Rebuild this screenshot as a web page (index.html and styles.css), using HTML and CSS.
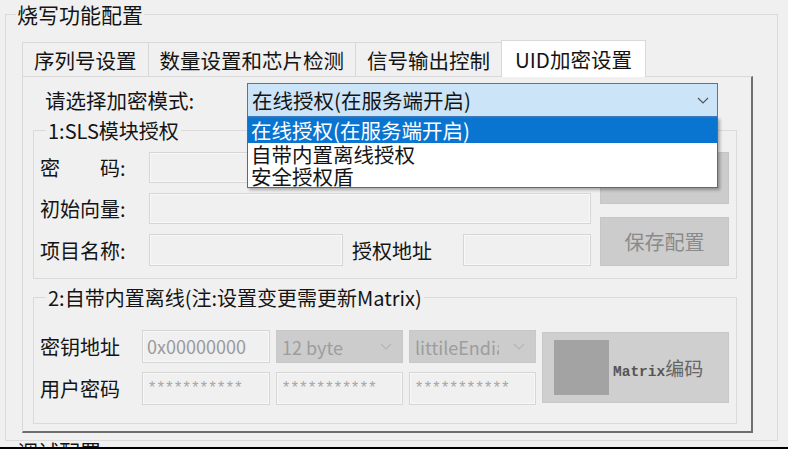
FILE: index.html
```html
<!DOCTYPE html>
<html lang="zh-CN">
<head>
 <meta charset="UTF-8">
 <meta name="viewport" content="width=device-width, initial-scale=1.0">
 <title>烧写功能配置 - UID加密设置</title>
 <link rel="stylesheet" href="styles.css">
</head>
<body>
 <div class="screen">
  <div class="group outer-group">
   <div class="group-title outer-title">烧写功能配置</div>

   <div class="tab-control">
    <div class="tab-strip">
     <div class="tab">序列号设置</div>
     <div class="tab">数量设置和芯片检测</div>
     <div class="tab">信号输出控制</div>
     <div class="tab active">UID加密设置</div>
    </div>

    <div class="tab-page">
     <div class="mode-row">
      <span class="mode-label">请选择加密模式:</span>
      <div class="combo focused">
       <span class="combo-text">在线授权(在服务端开启)</span>
       <svg class="chevron" width="12" height="7" viewBox="0 0 12 7"><path d="M1 1l5 5 5-5" fill="none" stroke="#555" stroke-width="1.2"/></svg>
       <!-- open dropdown list -->
       <ul class="dropdown">
        <li class="selected">在线授权(在服务端开启)</li>
        <li>自带内置离线授权</li>
        <li>安全授权盾</li>
       </ul>
      </div>
     </div>

     <div class="group sls-group">
      <div class="group-title">1:SLS模块授权</div>
      <div class="sls-body">
       <div class="field-col">
        <div class="field-row">
         <label class="field-label">密&emsp;&emsp;码:</label>
         <div class="textbox wide"></div>
        </div>
        <div class="field-row">
         <label class="field-label">初始向量:</label>
         <div class="textbox wide"></div>
        </div>
        <div class="field-row">
         <label class="field-label">项目名称:</label>
         <div class="textbox project"></div>
         <label class="field-label addr-label">授权地址</label>
         <div class="textbox addr"></div>
        </div>
       </div>
       <div class="btn-col">
        <button class="btn btn-read">读取配置</button>
        <button class="btn btn-save">保存配置</button>
       </div>
      </div>
     </div>

     <div class="group offline-group">
      <div class="group-title">2:自带内置离线(注:设置变更需更新Matrix)</div>
      <div class="offline-body">
       <div class="offline-grid">
        <label class="field-label">密钥地址</label>
        <div class="textbox value">0x00000000</div>
        <div class="combo disabled">
         <span class="combo-text">12 byte</span>
         <svg class="chevron" width="12" height="7" viewBox="0 0 12 7"><path d="M1 1l5 5 5-5" fill="none" stroke="#b5b5b5" stroke-width="1.2"/></svg>
        </div>
        <div class="combo disabled">
         <span class="combo-text">littileEndian</span>
         <svg class="chevron" width="12" height="7" viewBox="0 0 12 7"><path d="M1 1l5 5 5-5" fill="none" stroke="#b5b5b5" stroke-width="1.2"/></svg>
        </div>

        <label class="field-label">用户密码</label>
        <div class="textbox stars">***********</div>
        <div class="textbox stars">***********</div>
        <div class="textbox stars">***********</div>
       </div>
       <button class="matrix-btn">
        <span class="matrix-swatch"></span>
        <span class="matrix-text"><span class="mono">Matrix</span>编码</span>
       </button>
      </div>
     </div>
    </div>
   </div>
  </div>
  <div class="next-title">调试配置</div>
 </div>
 <div class="bottom-edge"></div>
</body>
</html>
```

FILE: styles.css
```css
* {
 box-sizing: border-box;
}

body {
 margin: 0;
 height: 449px;
 overflow: hidden;
 background-color: #f0f0f0;
 color: #141414;
 font-family: "Noto Sans CJK SC", "Noto Sans", sans-serif;
 font-size: 20px;
}

.screen {
 height: 447px;
 overflow: hidden;
}

.bottom-edge {
 height: 2px;
 background-color: #000;
}

/* group boxes */
.group {
 border: 1px solid #dadada;
}

.group-title {
 width: fit-content;
 margin: -10px 0 0 12px;
 padding: 0 2px;
 background-color: #f0f0f0;
 font-size: 20px;
 line-height: 20px;
}

.outer-group {
 margin: 14px 10px 0 5px;
 height: 427px;
}

.outer-title {
 margin: -14px 0 0 10px;
 padding: 0 1px;
 font-size: 21px;
 line-height: 26px;
}

.next-title {
 margin: -3px 0 0 17px;
 font-size: 21px;
 line-height: 26px;
}

/* tabs */
.tab-control {
 margin: 13px 24px 0 16px;
}

.tab-strip {
 display: flex;
 align-items: flex-end;
 height: 36px;
}

.tab {
 height: 34px;
 padding: 2px 11px 0;
 margin-right: -1px;
 border: 1px solid #d9d9d9;
 border-bottom: none;
 font-size: 20.5px;
 line-height: 30px;
 white-space: nowrap;
}

.tab.active {
 position: relative;
 z-index: 1;
 height: 37px;
 margin-bottom: -1px;
 padding: 3px 13px 0;
 background-color: #fff;
}

.tab-page {
 height: 357px;
 border-top: 1px solid #d9d9d9;
 border-left: 1px solid #d9d9d9;
 border-right: 2px solid #6e6e6e;
 border-bottom: 2px solid #6e6e6e;
}

/* mode select */
.mode-row {
 display: flex;
 align-items: center;
 margin-top: 6px;
 padding-left: 22px;
}

.mode-label {
 width: 202px;
 font-size: 20.5px;
}

.combo {
 position: relative;
 display: flex;
 align-items: center;
 justify-content: space-between;
 height: 34px;
}

.combo.focused {
 width: 471px;
 padding: 0 8px 0 4px;
 background-color: #cce4f7;
 border: 1px solid #3d7bbd;
 font-size: 20.5px;
}

.combo-text {
 flex: 1;
 overflow: hidden;
 white-space: nowrap;
}

.dropdown {
 position: absolute;
 top: 33px;
 left: -1px;
 z-index: 5;
 width: 471px;
 margin: 0;
 padding: 0;
 list-style: none;
 background-color: #fff;
 border: 1px solid #41729e;
 box-shadow: 2px 2px 3px rgba(0, 0, 0, 0.3);
 font-size: 20.5px;
}

.dropdown li {
 height: 22px;
 padding-left: 3px;
 line-height: 22px;
 overflow: hidden;
}

.dropdown li.selected {
 height: 25px;
 line-height: 25px;
 background-color: #0a74d1;
 color: #fff;
}

/* 1:SLS */
.sls-group {
 margin: 13px 14px 0 10px;
}

.sls-body {
 display: flex;
 margin-top: 11px;
 padding: 0 7px 12px 6px;
}

.field-col {
 display: flex;
 flex-direction: column;
 gap: 10px;
 width: 551px;
}

.field-row {
 display: flex;
 align-items: center;
 height: 31px;
}

.field-row:last-child {
 height: 32px;
}

.field-label {
 width: 109px;
 white-space: nowrap;
}

.addr-label {
 width: 111px;
 margin-left: 9px;
}

.textbox {
 height: 100%;
 background-color: #f0f0f0;
 border: 1px solid #d6d6d6;
 box-shadow: inset 0 0 0 1px #f8f8f8;
 color: #9a9a9a;
 white-space: nowrap;
 overflow: hidden;
}

.textbox.wide {
 width: 442px;
}

.textbox.project {
 width: 194px;
}

.textbox.addr {
 width: 128px;
}

.btn-col {
 display: flex;
 flex-direction: column;
 gap: 13px;
 width: 129px;
 margin-left: 9px;
}

.btn {
 width: 100%;
 padding: 0;
 background-color: #cccccc;
 border: 1px solid #c6c6c6;
 color: #8a8a8a;
 font-family: inherit;
 font-size: 20px;
}

.btn-read {
 height: 52px;
 color: transparent;
}

.btn-save {
 height: 49px;
}

/* 2:offline */
.offline-group {
 margin: 18px 14px 0 10px;
}

.offline-body {
 display: flex;
 align-items: center;
 margin-top: 22px;
 padding: 0 7px 18px 6px;
}

.offline-grid {
 display: grid;
 grid-template-columns: 96px 128px 127px 127px;
 grid-auto-rows: 33px;
 column-gap: 6px;
 row-gap: 9px;
 align-items: center;
}

.offline-grid .field-label {
 width: auto;
}

.textbox.value {
 padding-left: 4px;
 font-size: 18px;
 line-height: 31px;
}

.textbox.stars {
 padding-left: 6px;
 font-family: "Liberation Sans", sans-serif;
 font-size: 16px;
 letter-spacing: 2.4px;
 line-height: 29px;
 color: #a5a5a5;
}

.combo.disabled {
 height: 33px;
 padding: 0 10px 0 5px;
 background-color: #cccccc;
 border: 1px solid #c8c8c8;
 color: #9d9d9d;
 font-size: 18px;
}

.combo.disabled .combo-text {
 margin-right: 14px;
}

.matrix-btn {
 display: flex;
 align-items: center;
 width: 187px;
 height: 71px;
 margin-left: 6px;
 padding: 0 0 0 11px;
 background-color: #cfcfcf;
 border: 1px solid #c8c8c8;
 font-family: inherit;
}

.matrix-swatch {
 width: 55px;
 height: 55px;
 background-color: #a3a3a3;
}

.matrix-text {
 margin-left: 4px;
 color: #666;
 font-size: 19px;
 white-space: nowrap;
}

.matrix-text .mono {
 font-family: "Liberation Mono", monospace;
 font-size: 14.5px;
 font-weight: bold;
 color: #555;
}
```
